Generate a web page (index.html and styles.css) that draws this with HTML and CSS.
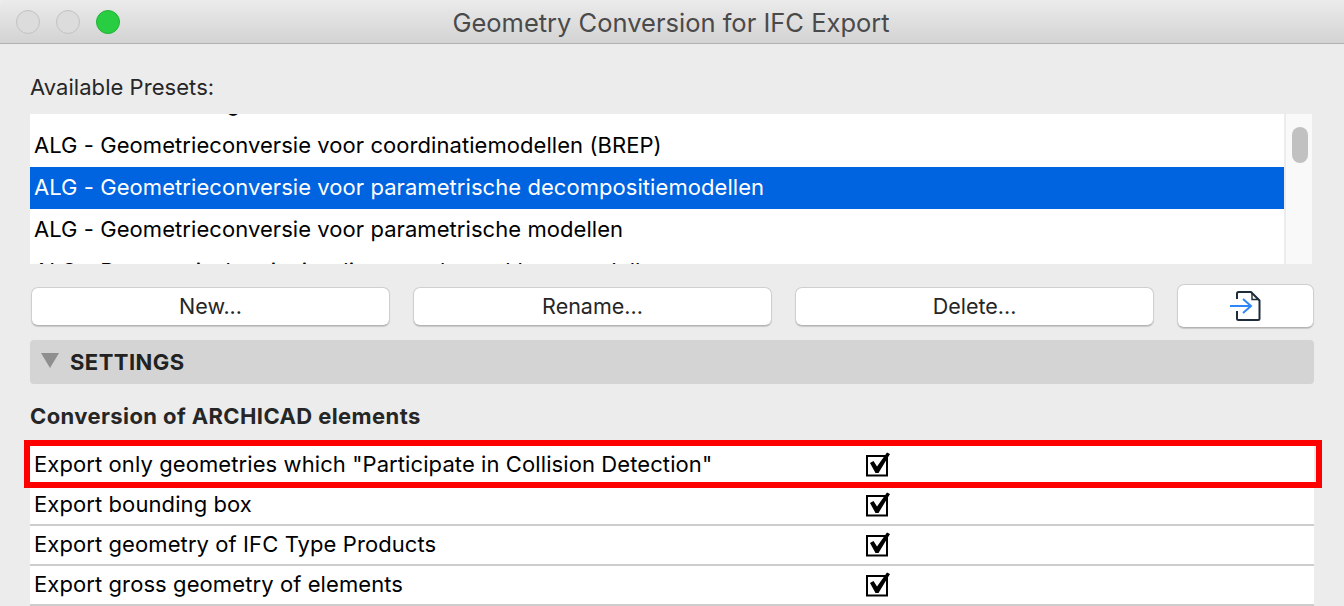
FILE: index.html
```html
<!DOCTYPE html>
<html lang="en">
<head>
<meta charset="utf-8">
<title>Geometry Conversion for IFC Export</title>
<link rel="stylesheet" href="styles.css">
</head>
<body>
<div class="window">
  <header class="titlebar">
    <div class="lights">
      <span class="light"></span>
      <span class="light"></span>
      <span class="light light-green"></span>
    </div>
    <div class="title">Geometry Conversion for IFC Export</div>
  </header>
  <main class="content">
    <div class="label">Available Presets:</div>
    <div class="listbox">
      <div class="list-view">
        <div class="list-items">
          <div class="item">ALG - Basismodel geheel</div>
          <div class="item">ALG - Geometrieconversie voor coordinatiemodellen (BREP)</div>
          <div class="item selected">ALG - Geometrieconversie voor parametrische decompositiemodellen</div>
          <div class="item">ALG - Geometrieconversie voor parametrische modellen</div>
          <div class="item">ALG - Parametrische uitwisseling voor bewerkbare modellen</div>
        </div>
      </div>
      <div class="scrollbar"><span class="thumb"></span></div>
    </div>
    <div class="buttons">
      <button class="btn">New...</button>
      <button class="btn">Rename...</button>
      <button class="btn">Delete...</button>
      <button class="btn btn-icon" aria-label="Import">
        <svg width="32" height="32" viewBox="0.5 0 32 32" fill="none">
          <path d="M7.500 9V3.500A1.500 1.500 0 0 1 9 2H21.500L30 10.500V28.500A1.500 1.500 0 0 1 28.500 30H9A1.500 1.500 0 0 1 7.500 28.500V21" stroke="#1f2d3a" stroke-width="2" stroke-linejoin="round"/>
          <path d="M22.500 3V9.500H29" stroke="#1f2d3a" stroke-width="1.400"/>
          <path d="M0.500 16H21.500M13.500 9L21.500 16L13.500 23" stroke="#2f86f6" stroke-width="2"/>
        </svg>
      </button>
    </div>
    <div class="settings">
      <span class="triangle"></span>
      <span class="settings-text">SETTINGS</span>
    </div>
    <h2 class="heading">Conversion of ARCHICAD elements</h2>
    <div class="table">
      <div class="highlight"></div>
      <div class="row row-first"><span class="cell">Export only geometries which "Participate in Collision Detection"</span>
        <svg class="check" width="26" height="26" viewBox="0 0 26 26"><rect x="2" y="5" width="20" height="19.500" fill="#fff" stroke="#000" stroke-width="2"/><polygon points="5,12 8.500,10 12,15.500 22,1.500 25,3 13.500,22 10.500,22"/></svg>
      </div>
      <div class="row"><span class="cell">Export bounding box</span>
        <svg class="check" width="26" height="26" viewBox="0 0 26 26"><rect x="2" y="5" width="20" height="19.500" fill="#fff" stroke="#000" stroke-width="2"/><polygon points="5,12 8.500,10 12,15.500 22,1.500 25,3 13.500,22 10.500,22"/></svg>
      </div>
      <div class="row"><span class="cell">Export geometry of IFC Type Products</span>
        <svg class="check" width="26" height="26" viewBox="0 0 26 26"><rect x="2" y="5" width="20" height="19.500" fill="#fff" stroke="#000" stroke-width="2"/><polygon points="5,12 8.500,10 12,15.500 22,1.500 25,3 13.500,22 10.500,22"/></svg>
      </div>
      <div class="row"><span class="cell">Export gross geometry of elements</span>
        <svg class="check" width="26" height="26" viewBox="0 0 26 26"><rect x="2" y="5" width="20" height="19.500" fill="#fff" stroke="#000" stroke-width="2"/><polygon points="5,12 8.500,10 12,15.500 22,1.500 25,3 13.500,22 10.500,22"/></svg>
      </div>
    </div>
  </main>
</div>
</body>
</html>
```
FILE: styles.css
```css
* { box-sizing: border-box; }
html, body { margin: 0; height: 100%; background: #ececec; overflow: hidden; }
body { font-family: Inter, "Liberation Sans", sans-serif; color: #000; }
.window { width: 1344px; height: 606px; background: #ececec; border-top-left-radius: 8px; overflow: hidden; }
.titlebar { height: 44px; display: flex; align-items: center; position: relative; background: linear-gradient(#ebebeb, #d3d3d3); border-bottom: 1px solid #b1b1b1; }
.lights { display: flex; gap: 16px; padding-left: 16px; }
.light { width: 24px; height: 24px; border-radius: 50%; background: #dcdcdc; border: 1px solid #c2c2c2; }
.light-green { background: #28cd41; border-color: #20b336; }
.title { position: absolute; left: 0; right: 2px; top: 8px; text-align: center; font-size: 25.500px; line-height: 30px; color: #4a4a4a; }
.content { padding: 0 30px; position: relative; }
.label { padding-top: 29px; height: 70px; font-size: 22px; line-height: 28px; color: #262626; letter-spacing: 0.050px; }
.listbox { display: flex; height: 150px; width: 1282px; background: #fff; }
.list-view { flex: 1; overflow: hidden; }
.list-items { margin-top: -31px; }
.item { height: 42px; padding-left: 4px; font-size: 22px; line-height: 41px; letter-spacing: 0.060px; white-space: nowrap; color: #000; }
.selected { background: #0064e1; color: #fff; }
.scrollbar { width: 28px; background: #f9f9f9; border-left: 2px solid #ececec; padding: 13px 0 0 6px; }
.thumb { display: block; width: 16px; height: 36px; border-radius: 8px; background: #c1c1c1; }
.buttons { display: flex; align-items: center; gap: 23px; height: 76px; padding: 8px 0 0 1px; }
.btn { width: 359px; height: 39px; padding: 0; background: #fff; border: 1px solid #cfcfcf; border-bottom: 1.500px solid #b4b4b4; border-radius: 7px; box-shadow: 0 1px 1px rgba(0, 0, 0, 0.15); font: 21.500px Inter, "Liberation Sans", sans-serif; color: #262626; }
.btn-icon { width: 137px; height: 44px; display: flex; align-items: center; justify-content: center; }
.settings { height: 44px; display: flex; align-items: center; background: #d4d4d4; border-radius: 4px; padding-left: 11px; width: 1284px; }
.triangle { width: 0; height: 0; border-left: 9px solid transparent; border-right: 9px solid transparent; border-top: 15px solid #8f8f8f; margin-bottom: 4px; }
.settings-text { margin-left: 11px; font-size: 22px; font-weight: 700; color: #222; letter-spacing: 0.450px; }
.heading { margin: 0; height: 61px; padding-top: 18px; font-size: 22px; line-height: 28px; font-weight: 700; color: #262626; letter-spacing: 0.400px; }
.table { position: relative; width: 1284px; background: #fff; }
.highlight { position: absolute; left: -6px; right: -8px; top: -5px; height: 48px; border: 6px solid #f00; z-index: 1; }
.row { height: 40px; position: relative; display: flex; align-items: center; padding: 0 0 3px 4px; border-bottom: 2px solid #cdcdcd; font-size: 22px; letter-spacing: 0.090px; }
.row-first { height: 41px; padding-bottom: 3px; border-bottom: 0; }
.cell { width: 830px; white-space: nowrap; }
.check { position: absolute; left: 835px; top: 5px; }
.row-first .check { top: 6px; }
```
